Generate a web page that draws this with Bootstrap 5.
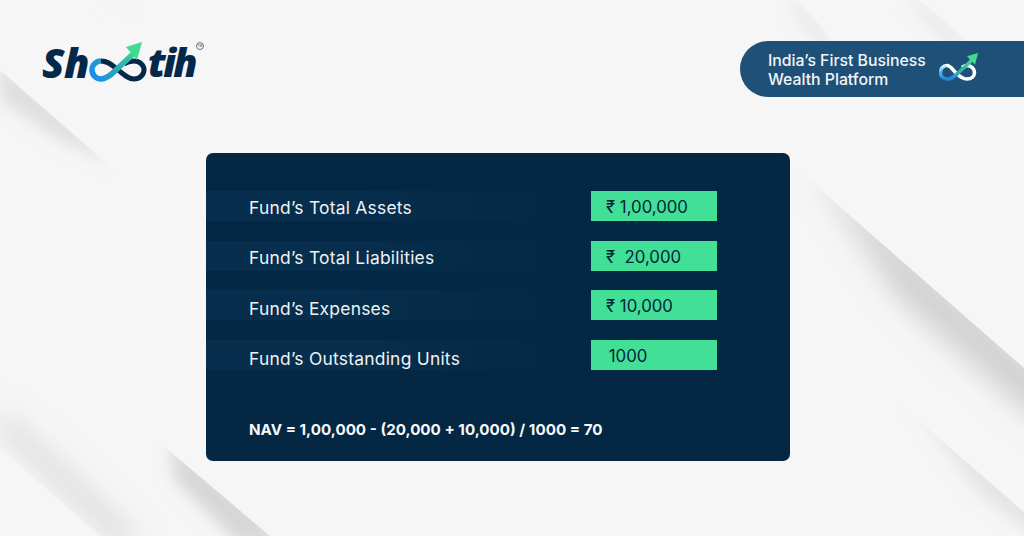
<!DOCTYPE html>
<html lang="en">
<head>
<meta charset="utf-8">
<title>Shootih NAV</title>
<link href="https://cdn.jsdelivr.net/npm/bootstrap@5.3.0/dist/css/bootstrap.min.css" rel="stylesheet">
<style>
html,body{height:100%;margin:0}
body{width:1024px;height:536px;overflow:hidden;background:#f6f6f6;font-family:Inter,"Liberation Sans",sans-serif;position:relative}
.bg-art{position:absolute;inset:0;width:1024px;height:536px;z-index:0}
.page{position:relative;z-index:1;height:536px}
.top{height:153px;padding-top:41px}
.logo{margin-left:42px;height:41px;align-items:flex-end;color:#05284a;font-family:"Open Sans",sans-serif;font-weight:800;font-style:italic;font-size:41px;line-height:40px;position:relative}
.logo span.sh{letter-spacing:-.5px}
.logo span.ti{letter-spacing:-2.6px;font-size:39px}
.logo svg{flex:none;margin:0 -1px 0 -2px}
.tm{position:absolute;left:154px;top:1px;width:8px;height:8px;border:1px solid #66757f;border-radius:50%;font:700 3px/6px "Liberation Sans",sans-serif;color:#66757f;text-align:center}
.pill{width:284px;height:56px;background:#1f5178;border-radius:28px 0 0 28px;padding-left:28px;color:#f2f6f8;font-size:15.8px;line-height:19px;font-weight:500}
.pill .cap{width:158px;white-space:nowrap;padding-top:1px}
.pill svg{margin-left:13px;margin-bottom:4px}
.panel{margin-left:206px;width:584px;height:308px;background:#042844;border-radius:7px;padding-top:38px;color:#eef2f5}
.line{height:30px;margin-bottom:19.6px;background:linear-gradient(90deg,#072e4c,#072e4c 25%,#042844 60%);padding-left:43px}
.label{width:342px;font-size:17.4px;letter-spacing:.25px;padding-top:4px}
.line:nth-child(n+3) .label{padding-top:8px}
.val{width:126px;height:30px;background:#42e097;color:#03233a;font-size:16.8px;padding-left:15px;line-height:32px;white-space:pre}
.val.units{padding-left:13px}
.formula{margin-top:49px;padding-left:43px;font-size:15.2px;font-weight:700;color:#f5f7f9}
</style>
</head>
<body>
<svg class="bg-art" viewBox="0 0 1024 536" aria-hidden="true">
<defs>
<filter id="b14" x="-30%" y="-30%" width="160%" height="160%"><feGaussianBlur stdDeviation="14"/></filter>
<filter id="b8" x="-30%" y="-30%" width="160%" height="160%"><feGaussianBlur stdDeviation="8"/></filter>
<clipPath id="ca"><polygon points="790,163 1024,368 1024,536 790,536"/></clipPath>
<clipPath id="ca2"><polygon points="870,378 1024,512 1024,536 870,536"/></clipPath>
<clipPath id="cb"><polygon points="0,70 160,210 0,210"/></clipPath>
<clipPath id="cc"><polygon points="0,448 100,536 300,536 300,340 0,340"/></clipPath>
<clipPath id="cd"><polygon points="133,420 270,536 100,536 100,420"/></clipPath>
<clipPath id="ce"><polygon points="797,0 835,42 760,42 760,0"/></clipPath>
<clipPath id="cf"><polygon points="920,0 968,42 880,42 880,0"/></clipPath>
</defs>
<g clip-path="url(#ca)"><polygon points="810,165 1060,385 1060,430 1024,410 900,300" fill="#d0d0d0" filter="url(#b14)"/></g>
<g clip-path="url(#ca2)"><polygon points="910,400 1050,520 1040,540 980,495" fill="#e4e4e4" filter="url(#b8)"/></g>
<g clip-path="url(#cb)"><polygon points="0,60 120,165 60,140 0,100" fill="#dedede" filter="url(#b8)"/></g>
<g clip-path="url(#cc)"><polygon points="0,430 120,545 140,540 60,465 0,410" fill="#d6d6d6" filter="url(#b14)"/></g>
<g clip-path="url(#cd)"><polygon points="170,440 290,540 240,545 175,480" fill="#d6d6d6" filter="url(#b8)"/></g>
<g clip-path="url(#ce)"><polygon points="797,0 835,42 815,42 785,0" fill="#e8e8e8" filter="url(#b8)"/></g>
<g clip-path="url(#cf)"><polygon points="920,0 968,42 948,42 908,0" fill="#e6e6e6" filter="url(#b8)"/></g>
<polygon points="110,0 150,20 125,10 104,0" fill="#f1f1f1" filter="url(#b8)"/>
</svg>
<div class="page">
<div class="top d-flex justify-content-between align-items-start">
<div class="logo d-flex">
<span class="sh">Sh</span>
<svg width="62" height="42" viewBox="0 0 62 42" role="img" aria-label="infinity arrow">
<defs>
<linearGradient id="lg" gradientUnits="userSpaceOnUse" x1="6" y1="38" x2="50" y2="8"><stop offset="0" stop-color="#1a8bf0"/><stop offset=".45" stop-color="#27a9b5"/><stop offset="1" stop-color="#3fdc8f"/></linearGradient>
</defs>
<path d="M37 24C40 22 43 21 47 21C52.5 21 57 25 57 30C57 35 52.5 39 47 39C41 39 36 34 30 29C25 25 21 21 14 21" fill="none" stroke="#05284a" stroke-width="5"/>
<path d="M14 21C9 21 5 25 5 30C5 35 9 39 14 39C20 39 25 34 30 29L46 14" fill="none" stroke="url(#lg)" stroke-width="5.5"/>
<polygon points="39,7 55,2 50,20" fill="#3fdc8f"/>
</svg>
<span class="ti">tih</span>
<span class="tm">TM</span>
</div>
<div class="pill d-flex align-items-center">
<div class="cap">India’s First Business<br>Wealth Platform</div>
<svg width="40" height="28" viewBox="0 0 40 28" role="img" aria-label="infinity arrow">
<defs>
<linearGradient id="lb" gradientUnits="userSpaceOnUse" x1="6" y1="11" x2="8" y2="26"><stop offset="0" stop-color="#ffffff"/><stop offset=".5" stop-color="#45b4f2"/><stop offset="1" stop-color="#1f86dc"/></linearGradient>
<linearGradient id="lg2" gradientUnits="userSpaceOnUse" x1="15" y1="23" x2="34" y2="6"><stop offset="0" stop-color="#2a9fb0"/><stop offset="1" stop-color="#3fdc8f"/></linearGradient>
</defs>
<path d="M23 14.5C25 13 26.5 12.5 28 12.5C32 12.5 35.5 15.5 35.5 19.5C35.5 23.5 32 26 28 26C23 26 20 23 17 20C14 17 11.5 12.5 8 12.5" fill="none" stroke="#fff" stroke-width="3.6"/>
<path d="M8 12.5C4 12.5 1.5 16 1.5 19.5C1.5 23.5 4.5 26 8.5 26C12 26 15 24 18 21" fill="none" stroke="url(#lb)" stroke-width="3.6"/>
<path d="M17 22L33 7" fill="none" stroke="url(#lg2)" stroke-width="3.6"/>
<polygon points="28,3.3 39,0 36,11.7" fill="#3fdc8f"/>
</svg>
</div>
</div>
<div class="panel">
<div class="line d-flex align-items-center"><div class="label">Fund’s Total Assets</div><div class="val">₹ 1,00,000</div></div>
<div class="line d-flex align-items-center"><div class="label">Fund’s Total Liabilities</div><div class="val">₹  20,000</div></div>
<div class="line d-flex align-items-center"><div class="label">Fund’s Expenses</div><div class="val">₹ 10,000</div></div>
<div class="line d-flex align-items-center"><div class="label">Fund’s Outstanding Units</div><div class="val units"> 1000</div></div>
<div class="formula">NAV = 1,00,000 - (20,000 + 10,000) / 1000 = 70</div>
</div>
</div>
<script src="https://cdn.jsdelivr.net/npm/bootstrap@5.3.0/dist/js/bootstrap.bundle.min.js"></script>
</body>
</html>
